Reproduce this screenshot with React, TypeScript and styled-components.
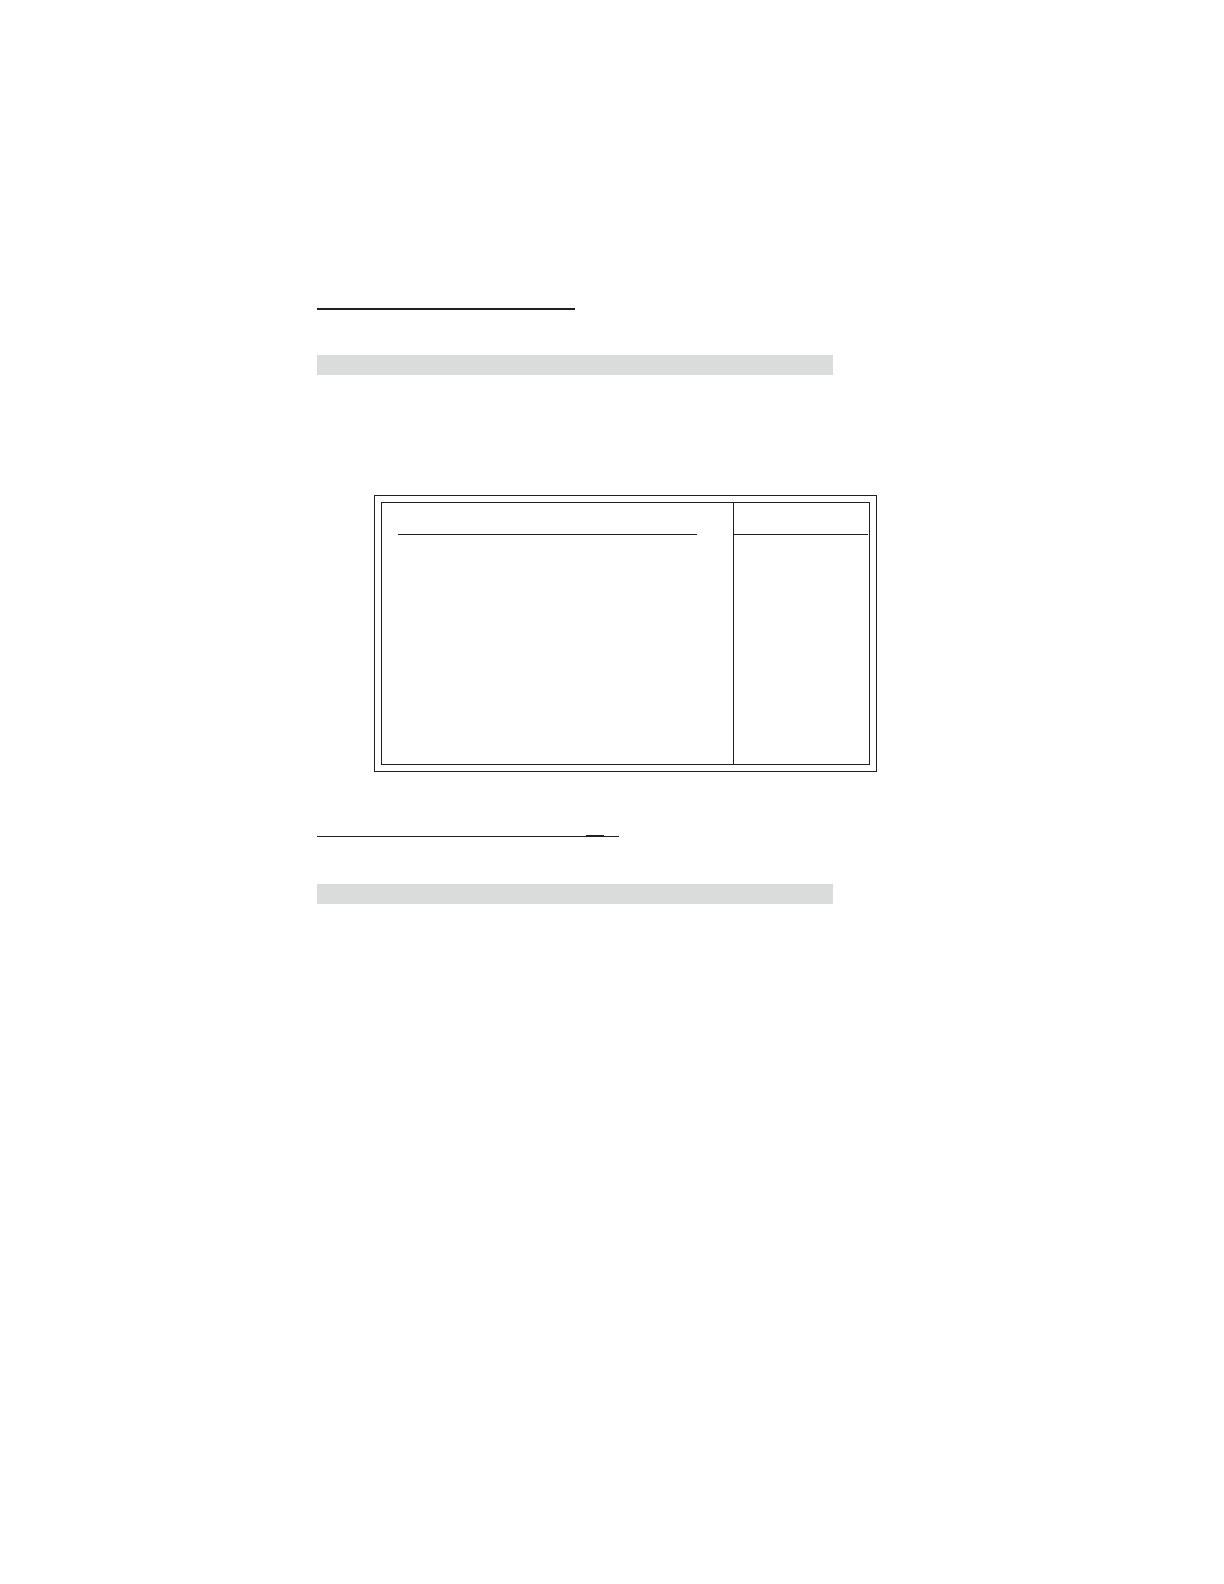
import React from "react";
import styled, { createGlobalStyle } from "styled-components";

const ink = "#231f20";
const shade = "#dadcdc";

const GlobalStyle = createGlobalStyle`
  *, *::before, *::after { box-sizing: border-box; }
  body {
    margin: 0;
    background: #ffffff;
    color: ${ink};
    font-family: "Liberation Sans", Arial, sans-serif;
  }
`;

const Page = styled.main`
  display: flex;
  flex-direction: column;
  padding: 308px 32px 0 317px;
`;

const Section = styled.section<{ $gap: number }>`
  display: flex;
  flex-direction: column;
  gap: ${({ $gap }) => $gap}px;
`;

const HeadingRule = styled.hr<{ $width: number }>`
  width: 100%;
  max-width: ${({ $width }) => $width}px;
  height: 2px;
  margin: 0;
  border: 0;
  background: ${ink};
`;

/* A thin rule whose middle part is twice as heavy. */
const MixedRule = styled.div`
  display: grid;
  grid-template-columns: 269fr 18fr 15fr;
  align-items: end;
  width: 100%;
  max-width: 302px;
`;

const RulePart = styled.div<{ $weight: number }>`
  height: ${({ $weight }) => $weight}px;
  background: ${ink};
`;

const Band = styled.div`
  width: 100%;
  max-width: 516px;
  height: 20px;
  background: ${shade};
`;

const Frame = styled.div`
  width: calc(100% - 57px);
  max-width: 503px;
  margin: 120px 0 63px 57px;
  padding: 6px;
  border: 1px solid ${ink};
`;

const Panel = styled.div`
  display: grid;
  grid-template-columns: 351fr 136fr;
  min-height: 263px;
  border: 1px solid ${ink};
`;

const MainPane = styled.div`
  padding: 0 36px 0 16px;
`;

const HelpPane = styled.aside`
  padding-right: 1px;
  border-left: 1px solid ${ink};
`;

const PaneHeader = styled.header`
  height: 32px;
  border-bottom: 1px solid ${ink};
`;

export default function App() {
  return (
    <>
      <GlobalStyle />
      <Page>
        <Section $gap={45}>
          <HeadingRule $width={258} />
          <Band />
        </Section>
        <Frame>
          <Panel>
            <MainPane>
              <PaneHeader />
            </MainPane>
            <HelpPane>
              <PaneHeader />
            </HelpPane>
          </Panel>
        </Frame>
        <Section $gap={47}>
          <MixedRule>
            <RulePart $weight={1} />
            <RulePart $weight={2} />
            <RulePart $weight={1} />
          </MixedRule>
          <Band />
        </Section>
      </Page>
    </>
  );
}
